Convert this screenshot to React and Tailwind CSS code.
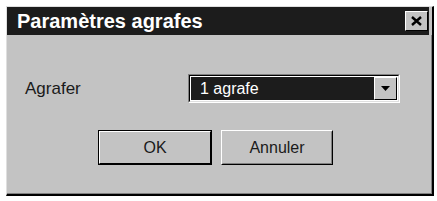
import React from 'react';

function CloseButton() {
    return (
        <div className="w-[23px] h-[20px] bg-[#c3c3c3] border border-t-white border-l-white border-r-black border-b-black flex items-center justify-center">
            <svg width="11" height="10" viewBox="0 0 11 10">
                <path d="M1 1 L10 9 M10 1 L1 9" stroke="#000" strokeWidth="2.4" />
            </svg>
        </div>
    );
}

function Select() {
    return (
        <div className="w-[212px] h-[29px] border border-t-[#808080] border-l-[#808080] border-r-white border-b-white">
            <div className="h-full border border-t-black border-l-black border-r-[#dfdfdf] border-b-[#dfdfdf] bg-white flex p-px">
                <div className="flex-1 bg-[#1c1c1c] text-white text-[16px] leading-none flex items-center pl-[9px]">
                    1 agrafe
                </div>
                <div className="w-[23px] bg-[#c3c3c3] border border-t-white border-l-white border-r-black border-b-black flex items-center justify-center">
                    <svg width="9" height="5" viewBox="0 0 9 5">
                        <path d="M0 0 H9 L4.5 5 Z" fill="#000" />
                    </svg>
                </div>
            </div>
        </div>
    );
}

export default function App() {
    return (
        <div className="w-[437px] h-[201px] bg-white pt-[6px] pl-[6px] font-['Liberation_Sans',Arial,sans-serif]">
            <div className="w-[428px] h-[190px] bg-[#c3c3c3] border-l border-t border-l-[#dfdfdf] border-t-[#dfdfdf] border-r-2 border-b-2 border-r-black border-b-black flex flex-col">
                <div className="h-[28px] mr-[3px] bg-[#1c1c1c] flex items-center justify-between pl-[10px] pr-px">
                    <span className="text-white font-bold text-[20px] leading-none">Paramètres agrafes</span>
                    <CloseButton />
                </div>
                <div className="flex-1 border-r border-b border-r-[#808080] border-b-[#808080]">
                    <div className="flex items-center mt-[39px] pl-[18px]">
                        <span className="w-[163px] text-[17px] leading-none text-[#1a1a1a]">Agrafer</span>
                        <Select />
                    </div>
                    <div className="flex mt-[27px] pl-[91px] gap-[9px]">
                        <div className="w-[114px] h-[35px] border border-black">
                            <div className="h-full border border-t-white border-l-white border-r-black border-b-black flex items-center justify-center text-[16px] text-[#1a1a1a] leading-none">
                                OK
                            </div>
                        </div>
                        <div className="w-[112px] h-[35px] border border-t-white border-l-white border-r-black border-b-black">
                            <div className="h-full border border-transparent border-r-[#808080] border-b-[#808080] flex items-center justify-center text-[16px] text-[#1a1a1a] leading-none">
                                Annuler
                            </div>
                        </div>
                    </div>
                </div>
            </div>
        </div>
    );
}
